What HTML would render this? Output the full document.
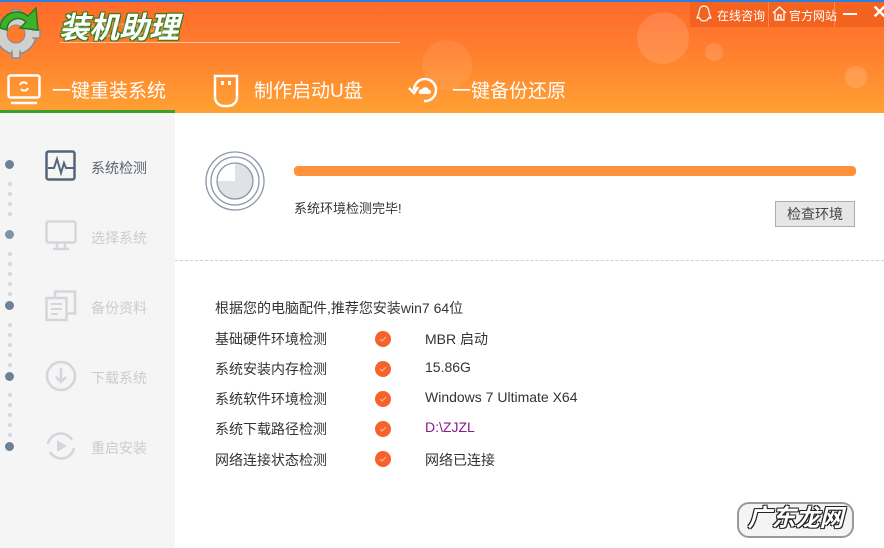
<!DOCTYPE html>
<html><head><meta charset="utf-8"><style>
*{margin:0;padding:0;box-sizing:border-box}
body{width:884px;height:548px;overflow:hidden;background:#fff;font-family:"Liberation Sans","Noto Sans CJK SC",sans-serif;position:relative}
.hd{position:absolute;left:0;top:0;width:884px;height:113px;background:linear-gradient(#ff6a2c 0%,#ff7f2e 45%,#ffa133 100%);border-top:2px solid #2b7fe0}
.abs{position:absolute}
.tab{position:absolute;top:76px;color:#fff;font-size:19px}
.side{position:absolute;left:0;top:113px;width:175px;height:435px;background:#f5f5f5}
.dot{position:absolute;left:5px;width:9px;height:9px;border-radius:50%;background:#6d8196}
.sd{position:absolute;left:8px;width:4px;height:4px;border-radius:50%;background:#d4d8dc}
.sl{position:absolute;left:91px;font-size:14px;color:#ccc}
.row{position:absolute;left:215px;font-size:14px;color:#333}
.val{position:absolute;left:425px;font-size:14px;color:#333}
</style></head><body>
<div class="hd"></div>
<!-- bubbles -->
<div class="abs" style="left:637px;top:12px;width:52px;height:52px;border-radius:50%;background:rgba(255,255,255,.13)"></div>
<div class="abs" style="left:705px;top:43px;width:18px;height:18px;border-radius:50%;background:rgba(255,255,255,.13)"></div>
<div class="abs" style="left:845px;top:66px;width:22px;height:22px;border-radius:50%;background:rgba(255,255,255,.15)"></div>
<div class="abs" style="left:422px;top:40px;width:50px;height:50px;border-radius:50%;background:rgba(255,255,255,.08)"></div>
<!-- logo gear -->
<svg class="abs" style="left:-8px;top:2px" width="54" height="60" viewBox="0 0 54 60">
 <g fill="#d0d0d0" stroke="#8a8a8a" stroke-width="1.5">
  <circle cx="24" cy="32" r="20"/>
  <rect x="20" y="8" width="8" height="8"/><rect x="20" y="48" width="8" height="8"/>
  <rect x="0" y="28" width="8" height="8"/><rect x="40" y="28" width="8" height="8"/>
 </g>
 <circle cx="24" cy="32" r="17" fill="#d0d0d0"/>
 <circle cx="24" cy="32" r="9" fill="#ff7a2c" stroke="#888"/>
 <path d="M8 26 A17 17 0 0 1 36 14 L44 6 L46 28 L28 26 L34 20 A11 11 0 0 0 15 28 Z" fill="#3fb02a" stroke="#2a7a1c" stroke-width="1.5"/>
</svg>
<div class="abs" style="left:59px;top:3px;font-size:30px;font-weight:bold;font-style:italic;color:#fff;text-shadow:0 0 2px #2d7d15,1px 1px 0 #2d7d15,-1px -1px 0 #2d7d15,1px -1px 0 #2d7d15,-1px 1px 0 #2d7d15">装机助理</div>
<div class="abs" style="left:60px;top:42px;width:340px;height:1px;background:rgba(255,230,210,.7)"></div>
<div class="abs" style="left:62px;top:43px;font-size:29px;font-weight:bold;color:rgba(255,255,255,.22);transform:scaleY(-.6);transform-origin:top">装机助理</div>
<!-- top right -->
<div class="abs" style="left:690px;top:2px;width:194px;height:25px;background:#f4621f"></div>
<div class="abs" style="left:768px;top:2px;width:1px;height:25px;background:#ff8a50"></div>
<div class="abs" style="left:834px;top:2px;width:1px;height:25px;background:#ff8a50"></div>
<svg class="abs" style="left:696px;top:5px" width="16" height="18"><path d="M8 1C4 1 3 5 3 8L1 13C3 13 3 12 3 12C4 15 6 16 8 16C10 16 12 15 13 12C13 12 13 13 15 13L13 8C13 5 12 1 8 1Z" fill="none" stroke="#fff" stroke-width="1.2"/></svg>
<div class="abs" style="left:717px;top:7px;color:#fff;font-size:12px">在线咨询</div>
<svg class="abs" style="left:772px;top:6px" width="15" height="15"><path d="M1 7L7.5 1L14 7M3 6V14H12V6M6 14V9H9V14" fill="none" stroke="#fff" stroke-width="1.3"/></svg>
<div class="abs" style="left:789px;top:7px;color:#fff;font-size:12px">官方网站</div>
<div class="abs" style="left:843px;top:13px;width:14px;height:2px;background:#fff"></div>
<div class="abs" style="left:872px;top:2px;color:#fff;font-size:18px;font-weight:bold">✕</div>
<!-- tabs -->
<svg class="abs" style="left:7px;top:74px" width="34" height="32"><rect x="1.5" y="1.5" width="31" height="22" rx="2" fill="none" stroke="#fff" stroke-width="2.5"/><path d="M4 29H30" stroke="#fff" stroke-width="2.5"/><path d="M13 11a4 4 0 0 1 7-1M21 14a4 4 0 0 1-7 1" stroke="#fff" stroke-width="2" fill="none"/></svg>
<div class="tab" style="left:52px">一键重装系统</div>
<div class="abs" style="left:0;top:110px;width:175px;height:3px;background:#3aa02a"></div>
<svg class="abs" style="left:213px;top:74px" width="26" height="34"><path d="M2 2H24V24A9 9 0 0 1 15 32H11A9 9 0 0 1 2 24Z" fill="none" stroke="#fff" stroke-width="2.5"/><rect x="8" y="7" width="3" height="4" fill="#fff"/><rect x="15" y="7" width="3" height="4" fill="#fff"/></svg>
<div class="tab" style="left:254px">制作启动U盘</div>
<svg class="abs" style="left:408px;top:74px" width="32" height="32"><path d="M6 16A11 11 0 1 1 16 27" fill="none" stroke="#fff" stroke-width="2.5"/><path d="M1 14L6 19L10 13" fill="none" stroke="#fff" stroke-width="2.5"/><path d="M11 19a3 3 0 0 1 3-4a4 4 0 0 1 7 1a2 2 0 0 1 0 4H12Z" fill="#fff"/></svg>
<div class="tab" style="left:452px">一键备份还原</div>
<!-- sidebar -->
<div class="side"></div>
<div class="dot" style="top:160px"></div><div class="dot" style="top:230px;background:#7d93a8"></div><div class="dot" style="top:301px"></div><div class="dot" style="top:372px"></div><div class="dot" style="top:442px"></div>
<div class="sd" style="top:182px"></div><div class="sd" style="top:192px"></div><div class="sd" style="top:202px"></div><div class="sd" style="top:212px"></div>
<div class="sd" style="top:252px"></div><div class="sd" style="top:262px"></div><div class="sd" style="top:272px"></div><div class="sd" style="top:282px"></div><div class="sd" style="top:292px"></div>
<div class="sd" style="top:323px"></div><div class="sd" style="top:333px"></div><div class="sd" style="top:343px"></div><div class="sd" style="top:353px"></div><div class="sd" style="top:363px"></div>
<div class="sd" style="top:393px"></div><div class="sd" style="top:403px"></div><div class="sd" style="top:413px"></div><div class="sd" style="top:423px"></div><div class="sd" style="top:433px"></div>
<svg class="abs" style="left:45px;top:150px" width="32" height="32"><rect x="1.5" y="1.5" width="28" height="28" rx="2" fill="none" stroke="#55657a" stroke-width="2.5"/><path d="M3 18H9L12 9L16 23L19 13L21 18H29" fill="none" stroke="#55657a" stroke-width="2"/></svg>
<div class="sl" style="top:158px;color:#5a6474">系统检测</div>
<svg class="abs" style="left:45px;top:220px" width="32" height="32"><rect x="1.5" y="1.5" width="29" height="21" rx="2" fill="none" stroke="#d3d6da" stroke-width="2.5"/><path d="M12 23V29M20 23V29M8 29H24" stroke="#d3d6da" stroke-width="2.5"/></svg>
<div class="sl" style="top:228px">选择系统</div>
<svg class="abs" style="left:45px;top:290px" width="32" height="32"><rect x="10" y="1.5" width="20" height="22" fill="none" stroke="#d3d6da" stroke-width="2.5"/><rect x="1.5" y="8" width="20" height="22" fill="#f5f5f5" stroke="#d3d6da" stroke-width="2.5"/><path d="M6 14H17M6 19H17M6 24H13" stroke="#d3d6da" stroke-width="2"/></svg>
<div class="sl" style="top:298px">备份资料</div>
<svg class="abs" style="left:45px;top:360px" width="32" height="32"><circle cx="16" cy="16" r="14" fill="none" stroke="#d3d6da" stroke-width="2.5"/><path d="M16 8V22M11 17L16 22L21 17" fill="none" stroke="#d3d6da" stroke-width="2.5"/></svg>
<div class="sl" style="top:368px">下载系统</div>
<svg class="abs" style="left:44px;top:430px" width="34" height="32"><path d="M4 14A13 13 0 0 1 28 10M30 18A13 13 0 0 1 6 22" fill="none" stroke="#d3d6da" stroke-width="2.5"/><path d="M13 10L23 16L13 22Z" fill="#d3d6da"/></svg>
<div class="sl" style="top:438px">重启安装</div>
<!-- main -->
<svg class="abs" style="left:204px;top:150px" width="62" height="62"><circle cx="31" cy="31" r="29" fill="#fff" stroke="#8a96a4" stroke-width="1.3"/><circle cx="31" cy="31" r="24" fill="none" stroke="#8a96a4" stroke-width="1.3"/><path d="M31 13A18 18 0 1 1 13 31H31Z" fill="#dfe3e8"/><circle cx="31" cy="31" r="18" fill="none" stroke="#8a96a4" stroke-width="1.3"/></svg>
<div class="abs" style="left:294px;top:166px;width:562px;height:10px;border-radius:4px;background:#fe913c"></div>
<div class="row" style="left:294px;top:198px;font-size:13px">系统环境检测完毕!</div>
<div class="abs" style="left:775px;top:201px;width:80px;height:26px;background:#e6e6e6;border:1px solid #adadad;font-size:14px;color:#444;text-align:center;line-height:24px">检查环境</div>
<div class="abs" style="left:175px;top:260px;width:709px;border-top:1px dashed #cfcfcf"></div>
<div class="row" style="top:298px">根据您的电脑配件,推荐您安装win7 64位</div>
<div class="row" style="top:329px">基础硬件环境检测</div>
<div class="row" style="top:359px">系统安装内存检测</div>
<div class="row" style="top:389px">系统软件环境检测</div>
<div class="row" style="top:419px">系统下载路径检测</div>
<div class="row" style="top:450px">网络连接状态检测</div>
<svg class="abs" style="left:375px;top:331px" width="16" height="140">
<g fill="#f5632a"><circle cx="8" cy="8" r="8"/><circle cx="8" cy="38" r="8"/><circle cx="8" cy="68" r="8"/><circle cx="8" cy="98" r="8"/><circle cx="8" cy="128" r="8"/></g>
<g fill="none" stroke="#ffb090" stroke-width="1.2"><path d="M5 8L7 10L11 6"/><path d="M5 38L7 40L11 36"/><path d="M5 68L7 70L11 66"/><path d="M5 98L7 100L11 96"/><path d="M5 128L7 130L11 126"/></g></svg>
<div class="val" style="top:329px">MBR 启动</div>
<div class="val" style="top:359px">15.86G</div>
<div class="val" style="top:389px">Windows 7 Ultimate X64</div>
<div class="val" style="top:419px;color:#8a1a8a">D:\ZJZL</div>
<div class="val" style="top:450px">网络已连接</div>
<div class="abs" style="left:737px;top:502px;width:117px;height:36px;border:2px solid #999;border-radius:12px;background:#f4f4f4;text-align:center;font-size:24px;line-height:30px;font-weight:bold;font-style:italic;color:#fff;text-shadow:1px 1px 0 #222,-1px -1px 0 #222,1px -1px 0 #222,-1px 1px 0 #222">广东龙网</div>
</body></html>
